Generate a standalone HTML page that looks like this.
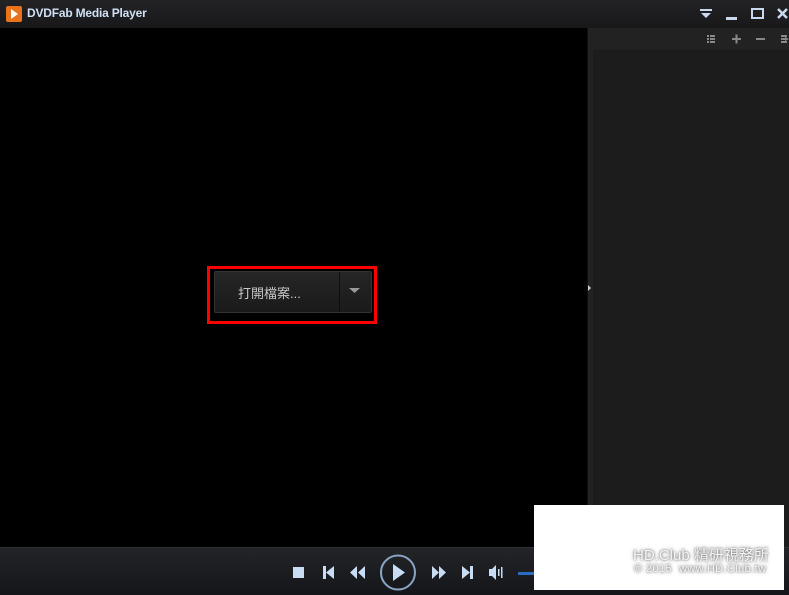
<!DOCTYPE html>
<html><head><meta charset="utf-8"><style>
*{margin:0;padding:0;box-sizing:border-box}
body{width:789px;height:595px;background:#000;position:relative;overflow:hidden;font-family:"Liberation Sans","Noto Sans CJK TC",sans-serif}
.a{position:absolute}
</style></head><body>
<div class="a" style="left:0;top:0;width:789px;height:28px;background:linear-gradient(#232325,#18181a)"></div>
<div class="a" style="left:6px;top:6px;width:16px;height:16px;background:#e8731c;border-radius:2px"></div>
<svg class="a" style="left:6px;top:6px" width="16" height="16"><path d="M5 3L12 8L5 13Z" fill="#fff"/></svg>
<div class="a" style="left:27px;top:6px;font-size:12px;font-weight:bold;color:#cfe0f4;letter-spacing:-0.2px">DVDFab Media Player</div>
<svg class="a" style="left:695px;top:6px" width="94" height="16">
<path d="M5 3h12v2H5z M6 7h10l-5 5z" fill="#c8d8ee"/>
<rect x="31" y="11" width="11" height="3" fill="#c8d8ee"/>
<rect x="57" y="3" width="11" height="9" fill="none" stroke="#c8d8ee" stroke-width="2"/>
<path d="M83 3l9 9M92 3l-9 9" stroke="#c8d8ee" stroke-width="2.5"/>
</svg>
<div class="a" style="left:588px;top:28px;width:201px;height:519px;background:#222"></div>
<div class="a" style="left:593px;top:50px;width:196px;height:497px;background:#1c1c1c"></div>
<div class="a" style="left:587px;top:28px;width:1px;height:519px;background:#111"></div>
<svg class="a" style="left:585px;top:283px" width="8" height="10"><path d="M3 2l3 3-3 3z" fill="#ccc"/></svg>
<svg class="a" style="left:705px;top:32px" width="84" height="14" fill="#888">
<rect x="2" y="3" width="2" height="2"/><rect x="5" y="3" width="5" height="2"/><rect x="2" y="6" width="2" height="2"/><rect x="5" y="6" width="5" height="2"/><rect x="2" y="9" width="2" height="2"/><rect x="5" y="9" width="5" height="2"/>
<rect x="27" y="6" width="9" height="2"/><rect x="30.5" y="2.5" width="2" height="9"/>
<rect x="51" y="6" width="9" height="2"/>
<rect x="76" y="3" width="6" height="2"/><rect x="76" y="6" width="4" height="2"/><rect x="76" y="9" width="6" height="2"/><path d="M80 5l4 2-4 2z"/>
</svg>
<div class="a" style="left:207px;top:266px;width:170px;height:58px;border:3px solid #f00"></div>
<div class="a" style="left:214px;top:271px;width:158px;height:42px;background:linear-gradient(#262626,#1a1a1a);border:1px solid #333;border-radius:2px"></div>
<div class="a" style="left:339px;top:272px;width:1px;height:40px;background:#0e0e0e"></div>
<div class="a" style="left:238px;top:283px;font-size:13px;color:#c8c8c8">打開檔案...</div>
<svg class="a" style="left:348px;top:287px" width="14" height="8"><path d="M1 1h11l-5.5 5z" fill="#999"/></svg>
<div class="a" style="left:0;top:547px;width:789px;height:48px;background:linear-gradient(#222428,#15161a);border-top:1px solid #2e3035"></div>
<svg class="a" style="left:290px;top:553px" width="250" height="40" fill="#c8dcf4">
<rect x="3" y="14" width="11" height="11"/>
<rect x="33" y="13" width="3" height="13"/><path d="M44 13v13l-8-6.5z"/>
<path d="M67 13v13l-7-6.5zM75 13v13l-7-6.5z"/>
<circle cx="108" cy="19.5" r="17" fill="none" stroke="#8aa4c4" stroke-width="2"/>
<path d="M103 11v17l12-8.5z"/>
<path d="M142 13v13l7-6.5zM149 13v13l7-6.5z"/>
<path d="M172 13v13l8-6.5z"/><rect x="180" y="13" width="3" height="13"/>
<path d="M199 16h3l4-4v15l-4-4h-3z"/><rect x="208" y="16" width="1.5" height="7"/><rect x="211" y="14" width="1.5" height="11"/>
<rect x="228" y="19" width="22" height="3" fill="#2a6bc4"/>
</svg>
<div class="a" style="left:534px;top:505px;width:250px;height:85px;background:#fff"></div>
<div class="a" style="left:633px;top:547px;font-size:15px;line-height:18px;color:#f4f4f4;text-shadow:0 0 2px #666,0 0 4px #999;white-space:nowrap">HD.Club 精研視務所</div>
<div class="a" style="left:634px;top:563px;font-size:11px;line-height:13px;color:#f4f4f4;text-shadow:0 0 2px #666,0 0 4px #999;white-space:nowrap;letter-spacing:0.4px">© 2015 &nbsp;www.HD.Club.tw</div>
</body></html>
